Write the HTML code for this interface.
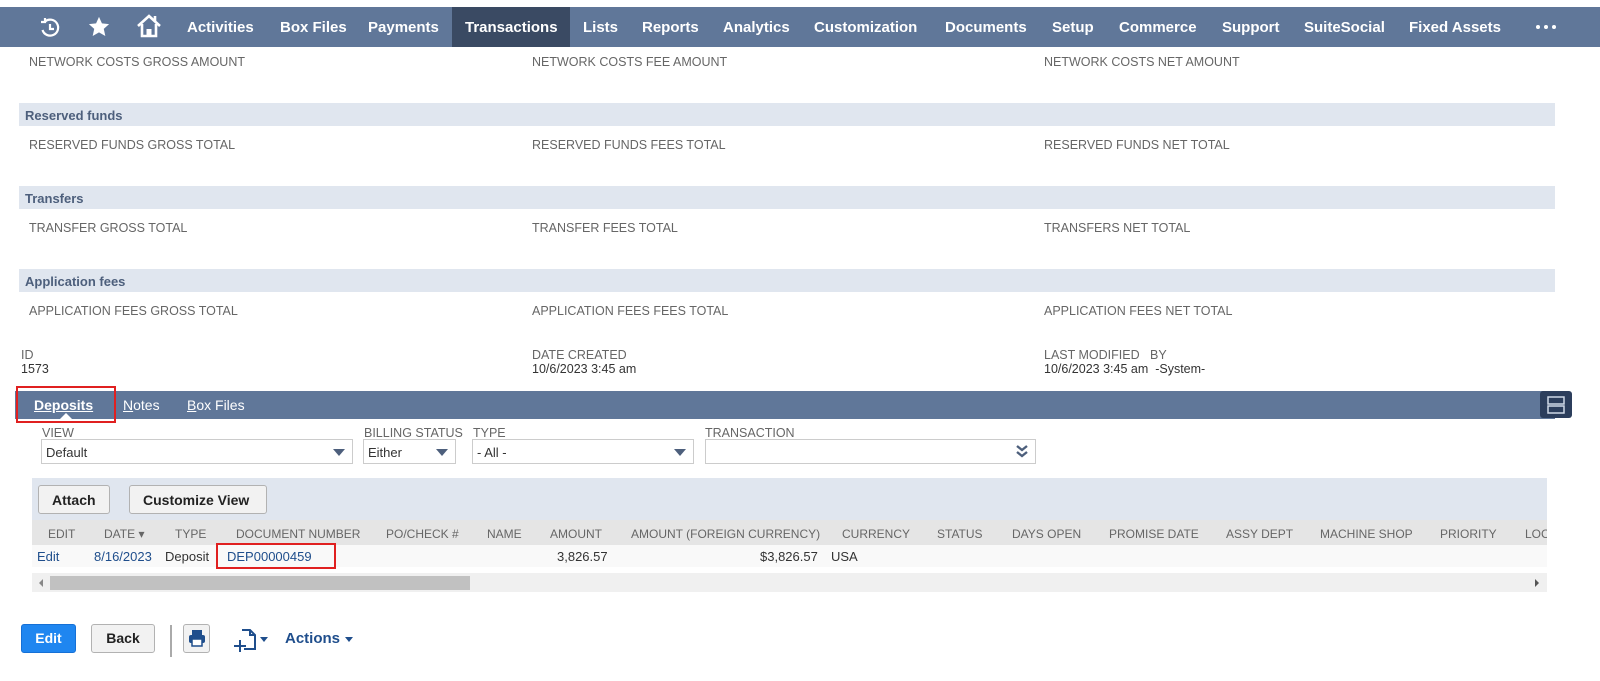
<!DOCTYPE html>
<html><head><meta charset="utf-8"><style>
*{margin:0;padding:0;box-sizing:border-box}
body{width:1600px;height:681px;background:#fff;font-family:"Liberation Sans",Arial,sans-serif;position:relative;overflow:hidden}
.a{position:absolute;white-space:nowrap}
.nav{position:absolute;left:0;top:7px;width:1600px;height:40px;background:#607799}
.nav span{position:absolute;top:12px;color:#fff;font-weight:bold;font-size:15px}
.f{font-size:12.5px;color:#666;position:absolute;white-space:nowrap}
.hd{position:absolute;left:19px;width:1536px;height:23px;background:#e0e6ef;color:#4d5f7c;font-weight:bold;font-size:13px;padding:5px 6px}
.v{font-size:12.5px;color:#333;position:absolute;white-space:nowrap}
.sel{position:absolute;top:439px;height:25px;border:1px solid #ccc;background:#fff;font-size:13px;color:#333;padding:5px 4px}
.tri{position:absolute;right:7px;top:9px;width:0;height:0;border-left:6px solid transparent;border-right:6px solid transparent;border-top:7px solid #4d5f7c}
.btn{position:absolute;top:485px;height:29px;border:1px solid #b2b2b2;border-radius:3px;background:#f2f2f2;font-weight:bold;font-size:14px;color:#222;padding:6px 13px}
.th{position:absolute;top:527px;font-size:12px;color:#666}
.td{position:absolute;top:549px;font-size:13px;color:#333}
</style></head><body>
<div class="nav">
<div style="position:absolute;left:452px;top:0;width:118px;height:40px;background:#3a4a63"></div>
<svg class="a" style="left:38px;top:9px" width="24" height="24" viewBox="0 0 24 24" fill="none" stroke="#fff" stroke-width="2.2"><path d="M7 5.5A8 8 0 1 1 4.5 14"/><path d="M7 2v4H3"/><path d="M12 8v5h4"/></svg>
<svg class="a" style="left:88px;top:9px" width="22" height="22" viewBox="0 0 24 24"><path fill="#fff" d="M12 1l3.2 7.1 7.8.8-5.8 5.2 1.7 7.7L12 17.8 5.1 21.8l1.7-7.7L1 8.9l7.8-.8z"/></svg>
<svg class="a" style="left:136px;top:6px" width="26" height="26" viewBox="0 0 26 26" fill="none" stroke="#fff" stroke-width="2.6"><path d="M2 13L13 3l11 10"/><path d="M6 11v12h14V11"/><rect x="10.5" y="16" width="5" height="7" fill="#fff" stroke="none"/><path d="M19 3v5"/></svg>
<span style="left:187px">Activities</span><span style="left:280px">Box Files</span><span style="left:368px">Payments</span><span style="left:465px">Transactions</span><span style="left:583px">Lists</span><span style="left:642px">Reports</span><span style="left:723px">Analytics</span><span style="left:814px">Customization</span><span style="left:945px">Documents</span><span style="left:1052px">Setup</span><span style="left:1119px">Commerce</span><span style="left:1222px">Support</span><span style="left:1304px">SuiteSocial</span><span style="left:1409px">Fixed Assets</span>
<div class="a" style="left:1536px;top:18px;width:4px;height:4px;border-radius:2px;background:#fff;box-shadow:8px 0 #fff,16px 0 #fff"></div>
</div>
<div class="f" style="left:29px;top:55px">NETWORK COSTS GROSS AMOUNT</div><div class="f" style="left:532px;top:55px">NETWORK COSTS FEE AMOUNT</div><div class="f" style="left:1044px;top:55px">NETWORK COSTS NET AMOUNT</div>
<div class="hd" style="top:103px">Reserved funds</div>
<div class="f" style="left:29px;top:138px">RESERVED FUNDS GROSS TOTAL</div><div class="f" style="left:532px;top:138px">RESERVED FUNDS FEES TOTAL</div><div class="f" style="left:1044px;top:138px">RESERVED FUNDS NET TOTAL</div>
<div class="hd" style="top:186px">Transfers</div>
<div class="f" style="left:29px;top:221px">TRANSFER GROSS TOTAL</div><div class="f" style="left:532px;top:221px">TRANSFER FEES TOTAL</div><div class="f" style="left:1044px;top:221px">TRANSFERS NET TOTAL</div>
<div class="hd" style="top:269px">Application fees</div>
<div class="f" style="left:29px;top:304px">APPLICATION FEES GROSS TOTAL</div><div class="f" style="left:532px;top:304px">APPLICATION FEES FEES TOTAL</div><div class="f" style="left:1044px;top:304px">APPLICATION FEES NET TOTAL</div>
<div class="f" style="left:21px;top:348px">ID</div><div class="v" style="left:21px;top:362px">1573</div>
<div class="f" style="left:532px;top:348px">DATE CREATED</div><div class="v" style="left:532px;top:362px">10/6/2023 3:45 am</div>
<div class="f" style="left:1044px;top:348px">LAST MODIFIED &nbsp;&nbsp;BY</div><div class="v" style="left:1044px;top:362px">10/6/2023 3:45 am &nbsp;-System-</div>
<div class="a" style="left:15px;top:391px;width:1540px;height:28px;background:#607799"></div>
<div class="a" style="left:1540px;top:391px;width:32px;height:27px;background:#2c3e5c;border-radius:3px"></div>
<svg class="a" style="left:1547px;top:396px" width="18" height="18" viewBox="0 0 18 18" fill="none" stroke="#cfd8e6" stroke-width="1.5"><rect x="1" y="1" width="16" height="7"/><rect x="1" y="10" width="16" height="7"/></svg>
<div class="a" style="left:34px;top:397px;color:#fff;font-weight:bold;font-size:14px;text-decoration:underline">Deposits</div>
<div class="a" style="left:60px;top:413px;width:0;height:0;border-left:6px solid transparent;border-right:6px solid transparent;border-bottom:6px solid #fff"></div>
<div class="a" style="left:123px;top:397px;color:#fff;font-size:14px"><u>N</u>otes</div>
<div class="a" style="left:187px;top:397px;color:#fff;font-size:14px"><u>B</u>ox Files</div>
<div class="a" style="left:16px;top:386px;width:100px;height:37px;border:2px solid #e02020"></div>
<div class="f" style="left:42px;top:426px">VIEW</div><div class="f" style="left:364px;top:426px">BILLING STATUS</div><div class="f" style="left:473px;top:426px">TYPE</div><div class="f" style="left:705px;top:426px">TRANSACTION</div>
<div class="sel" style="left:41px;width:312px">Default<div class="tri"></div></div>
<div class="sel" style="left:363px;width:93px">Either<div class="tri"></div></div>
<div class="sel" style="left:472px;width:222px">- All -<div class="tri"></div></div>
<div class="sel" style="left:705px;width:331px"><svg style="position:absolute;right:7px;top:5px" width="12" height="13" viewBox="0 0 12 13" fill="none" stroke="#4d5f7c" stroke-width="2.4"><path d="M1 1l5 4 5-4M1 7l5 4 5-4"/></svg></div>
<div class="a" style="left:32px;top:478px;width:1515px;height:42px;background:#e0e6ef"></div>
<div class="btn" style="left:38px;width:72px">Attach</div>
<div class="btn" style="left:129px;width:138px">Customize View</div>
<div class="a" style="left:32px;top:520px;width:1515px;height:25px;background:#e5e5e5"></div>
<div class="a" style="left:32px;top:545px;width:1515px;height:22px;background:#f9f9f9"></div>
<div class="th" style="left:48px">EDIT</div><div class="th" style="left:104px">DATE ▾</div><div class="th" style="left:175px">TYPE</div><div class="th" style="left:236px">DOCUMENT NUMBER</div><div class="th" style="left:386px">PO/CHECK #</div><div class="th" style="left:487px">NAME</div><div class="th" style="left:550px">AMOUNT</div><div class="th" style="left:631px">AMOUNT (FOREIGN CURRENCY)</div><div class="th" style="left:842px">CURRENCY</div><div class="th" style="left:937px">STATUS</div><div class="th" style="left:1012px">DAYS OPEN</div><div class="th" style="left:1109px">PROMISE DATE</div><div class="th" style="left:1226px">ASSY DEPT</div><div class="th" style="left:1320px">MACHINE SHOP</div><div class="th" style="left:1440px">PRIORITY</div><div class="th" style="left:1525px;width:22px;overflow:hidden">LOC</div>
<div class="td" style="left:37px;color:#1f4e8c">Edit</div><div class="td" style="left:94px;color:#1f4e8c">8/16/2023</div><div class="td" style="left:165px">Deposit</div><div class="td" style="left:227px;color:#1f4e8c">DEP00000459</div><div class="td" style="left:557px">3,826.57</div><div class="td" style="left:760px">$3,826.57</div><div class="td" style="left:831px">USA</div>
<div class="a" style="left:216px;top:543px;width:120px;height:26px;border:2px solid #e02020"></div>
<div class="a" style="left:32px;top:573px;width:1515px;height:19px;background:#f0f0f0"></div>
<div class="a" style="left:50px;top:576px;width:420px;height:14px;background:#c1c1c1"></div>
<div class="a" style="left:39px;top:579px;border-top:4px solid transparent;border-bottom:4px solid transparent;border-right:4px solid #888"></div>
<div class="a" style="left:1535px;top:579px;border-top:4px solid transparent;border-bottom:4px solid transparent;border-left:4px solid #555"></div>
<div class="a" style="left:21px;top:624px;width:55px;height:29px;background:#1f86f0;border:1px solid #1570d6;border-radius:3px;color:#fff;font-weight:bold;font-size:14px;text-align:center;line-height:27px">Edit</div>
<div class="a" style="left:91px;top:624px;width:64px;height:29px;background:#f2f2f2;border:1px solid #b2b2b2;border-radius:3px;color:#222;font-weight:bold;font-size:14px;text-align:center;line-height:27px">Back</div>
<div class="a" style="left:170px;top:625px;width:2px;height:32px;background:#aaa"></div>
<div class="a" style="left:183px;top:624px;width:27px;height:29px;background:#f2f2f2;border:1px solid #b2b2b2;border-radius:3px"></div>
<svg class="a" style="left:187px;top:628px" width="20" height="20" viewBox="0 0 20 20"><rect x="5" y="2" width="10" height="5" fill="#1f4e8c"/><rect x="2" y="7" width="16" height="8" rx="2" fill="#1f4e8c"/><rect x="5" y="11" width="10" height="7" fill="#fff" stroke="#1f4e8c" stroke-width="1.5"/></svg>
<svg class="a" style="left:233px;top:627px" width="28" height="26" viewBox="0 0 28 26" fill="none" stroke="#1f4e8c" stroke-width="2"><path d="M9 3h8l5 5v14H11"/><path d="M17 3v5h5"/><path d="M7 13v12M1 19h12"/></svg>
<div class="a" style="left:260px;top:637px;border-left:4px solid transparent;border-right:4px solid transparent;border-top:5px solid #1f4e8c"></div>
<div class="a" style="left:285px;top:630px;color:#1f4e8c;font-weight:bold;font-size:15px">Actions</div>
<div class="a" style="left:345px;top:637px;border-left:4px solid transparent;border-right:4px solid transparent;border-top:5px solid #1f4e8c"></div>
</body></html>
